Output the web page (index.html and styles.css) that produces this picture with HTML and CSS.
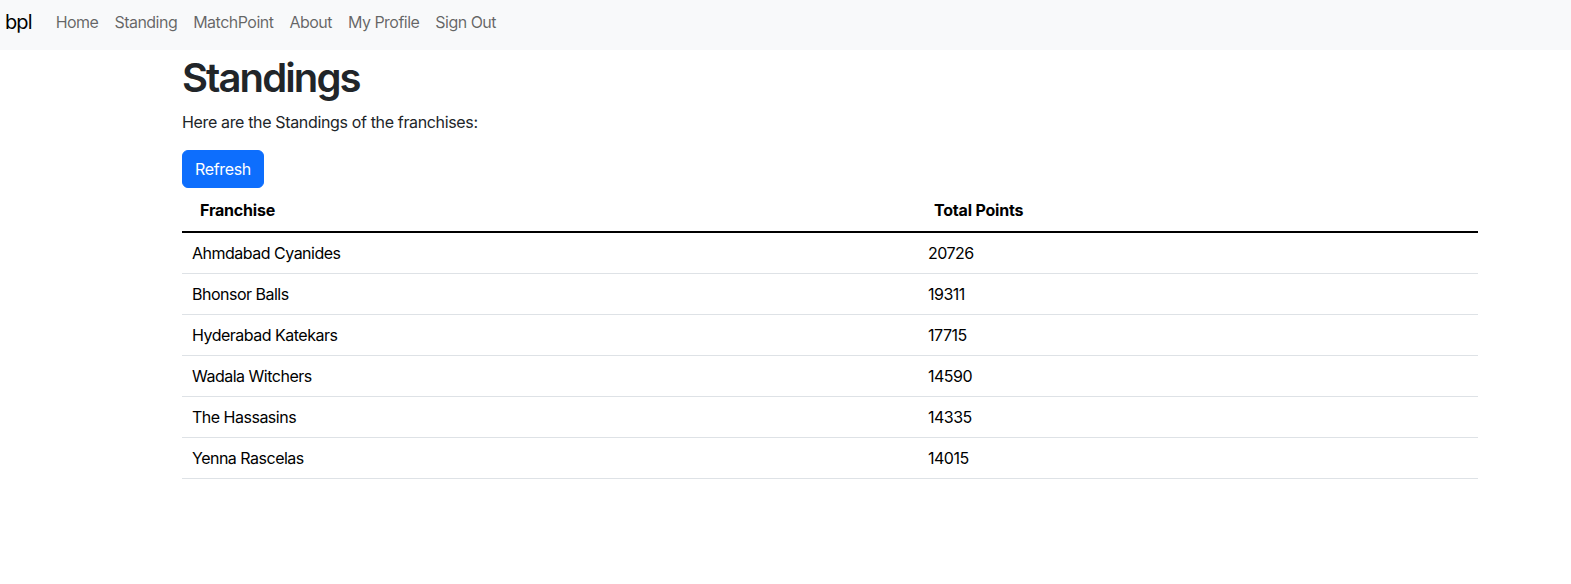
FILE: index.html
```html
<!DOCTYPE html>
<html lang="en">
<head>
<meta charset="utf-8">
<title>bpl - Standings</title>
<link rel="stylesheet" href="styles.css">
</head>
<body>
<nav class="navbar">
  <a class="brand" href="#">bpl</a>
  <ul class="nav">
    <li><a href="#">Home</a></li>
    <li><a href="#">Standing</a></li>
    <li><a href="#">MatchPoint</a></li>
    <li><a href="#">About</a></li>
    <li><a href="#">My Profile</a></li>
    <li><a href="#">Sign Out</a></li>
  </ul>
</nav>
<main class="container">
  <h1 class="title">Standings</h1>
  <p class="lead">Here are the Standings of the franchises:</p>
  <button class="btn">Refresh</button>
  <table class="table">
    <thead>
      <tr><th class="col-name">Franchise</th><th>Total Points</th></tr>
    </thead>
    <tbody>
      <tr><td>Ahmdabad Cyanides</td><td>20726</td></tr>
      <tr><td>Bhonsor Balls</td><td>19311</td></tr>
      <tr><td>Hyderabad Katekars</td><td>17715</td></tr>
      <tr><td>Wadala Witchers</td><td>14590</td></tr>
      <tr><td>The Hassasins</td><td>14335</td></tr>
      <tr><td>Yenna Rascelas</td><td>14015</td></tr>
    </tbody>
  </table>
</main>
</body>
</html>
```
FILE: styles.css
```css
* { box-sizing: border-box; }
body {
  margin: 0;
  font-family: Inter, "Noto Sans", "Liberation Sans", sans-serif;
  font-size: 16px;
  line-height: 1.5;
  color: #212529;
  background: #fff;
}
.navbar {
  height: 50px;
  background: #f8f9fa;
  display: flex;
  align-items: center;
  padding: 0 5px 6px;
}
.brand {
  font-size: 20px;
  color: #000;
  text-decoration: none;
  margin-right: 16px;
  letter-spacing: -0.9px;
}
.nav {
  list-style: none;
  display: flex;
  margin: 0;
  padding: 0;
}
.nav a {
  display: block;
  padding: 0 8px;
  color: rgba(0,0,0,0.6);
  text-decoration: none;
  letter-spacing: -0.52px;
}
.container {
  width: 1296px;
  margin-left: 182px;
}
.title {
  font-size: 40px;
  font-weight: 600;
  line-height: 1.2;
  margin: 4px 0 8px;
  letter-spacing: -1.9px;
}
.lead {
  margin: 0 0 16px;
  letter-spacing: -0.35px;
}
.btn {
  font-family: inherit;
  font-size: 16px;
  line-height: 1.5;
  color: #fff;
  background: #0d6efd;
  border: 1px solid #0d6efd;
  border-radius: 6px;
  padding: 6px 12px;
  letter-spacing: -0.35px;
}
.table {
  width: 100%;
  border-collapse: collapse;
  color: #000;
  margin-top: 2px;
}
.table th {
  text-align: left;
  font-weight: 700;
  padding: 8px 8px 9px 16px;
  border-bottom: 2px solid #000;
  letter-spacing: -0.2px;
}
.table th.col-name { width: 736px; padding-left: 18px; }
.table td {
  padding: 8px 10px;
  border-bottom: 1px solid #dee2e6;
  letter-spacing: -0.5px;
}
```
